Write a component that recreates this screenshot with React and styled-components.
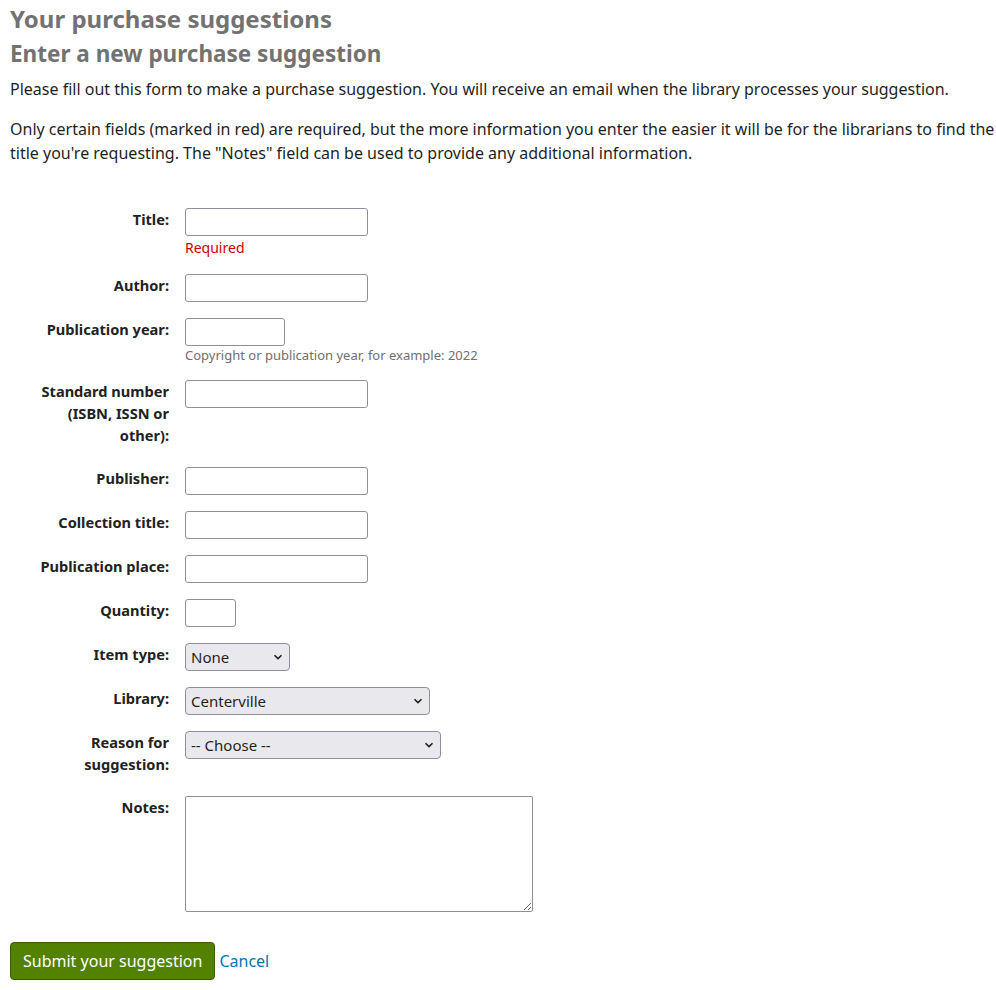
import React from "react";
import styled, { createGlobalStyle } from "styled-components";

const GlobalStyle = createGlobalStyle`
  body {
    margin: 0;
    background: #ffffff;
    font-family: "Noto Sans", "Open Sans", sans-serif;
    color: #1f1f1f;
  }
`;

function Chevron() {
  return (
    <svg width="10" height="6" viewBox="0 0 10 6">
      <path d="M1.5 1.2 L5 4.6 L8.5 1.2" fill="none" stroke="#1f1f1f" strokeWidth="1.6" />
    </svg>
  );
}

function SelectBox({ width, value }) {
  return (
    <StSelectWrap>
      <StSelect width={width} defaultValue={value}>
        <option>{value}</option>
      </StSelect>
      <StChevron>
        <Chevron />
      </StChevron>
    </StSelectWrap>
  );
}

function Row({ label, children }) {
  return (
    <StRow>
      <StLabel>{label}</StLabel>
      <StField>{children}</StField>
    </StRow>
  );
}

export default function App() {
  return (
    <StPage>
      <GlobalStyle />
      <StTitle>Your purchase suggestions</StTitle>
      <StSubTitle>Enter a new purchase suggestion</StSubTitle>
      <StText>
        Please fill out this form to make a purchase suggestion. You will receive an email when the
        library processes your suggestion.
      </StText>
      <StText>
        Only certain fields (marked in red) are required, but the more information you enter the
        easier it will be for the librarians to find the title you're requesting. The "Notes" field
        can be used to provide any additional information.
      </StText>

      <StForm>
        <Row label="Title:">
          <StInput width={183} />
          <StRequired>Required</StRequired>
        </Row>
        <Row label="Author:">
          <StInput width={183} />
        </Row>
        <Row label="Publication year:">
          <StInput width={100} />
          <StHint>Copyright or publication year, for example: 2022</StHint>
        </Row>
        <Row label="Standard number (ISBN, ISSN or other):">
          <StInput width={183} />
        </Row>
        <Row label="Publisher:">
          <StInput width={183} />
        </Row>
        <Row label="Collection title:">
          <StInput width={183} />
        </Row>
        <Row label="Publication place:">
          <StInput width={183} />
        </Row>
        <Row label="Quantity:">
          <StInput width={51} />
        </Row>
        <Row label="Item type:">
          <SelectBox width={105} value="None" />
        </Row>
        <Row label="Library:">
          <SelectBox width={245} value="Centerville" />
        </Row>
        <Row label="Reason for suggestion:">
          <SelectBox width={256} value="-- Choose --" />
        </Row>
        <Row label="Notes:">
          <StTextArea />
        </Row>
      </StForm>

      <StActions>
        <StSubmit type="button">Submit your suggestion</StSubmit>
        <StLink href="#">Cancel</StLink>
      </StActions>
    </StPage>
  );
}

const StPage = styled.div`
  padding: 2px 0 0 10px;
`;

const StTitle = styled.h1`
  margin: 0;
  font-size: 24px;
  line-height: 34px;
  font-weight: 700;
  color: #727272;
`;

const StSubTitle = styled.h2`
  margin: 1px 0 6px;
  font-size: 22.5px;
  line-height: 34px;
  font-weight: 700;
  color: #727272;
`;

const StText = styled.p`
  margin: 0 0 16px;
  font-size: 16px;
  line-height: 24px;
`;

const StForm = styled.div`
  display: flex;
  flex-direction: column;
  gap: 16px;
  margin-top: 43px;
`;

const StRow = styled.div`
  display: flex;
  align-items: flex-start;
`;

const StLabel = styled.label`
  flex: 0 0 140px;
  margin: 0 16px 0 19px;
  padding-bottom: 5px;
  text-align: right;
  font-size: 14.6px;
  line-height: 22px;
  font-weight: 700;
  color: #222222;
`;

const StField = styled.div`
  display: flex;
  flex-direction: column;
  align-items: flex-start;
`;

const StInput = styled.input`
  box-sizing: border-box;
  width: ${(p) => p.width}px;
  height: 28px;
  margin: 0;
  padding: 2px 6px;
  border: 1px solid #8f8f9d;
  border-radius: 3px;
  background: #ffffff;
  font-family: inherit;
  font-size: 15px;
`;

const StRequired = styled.span`
  margin-top: 1px;
  font-size: 14px;
  line-height: 21px;
  color: #cc0000;
`;

const StHint = styled.span`
  font-size: 13px;
  line-height: 18px;
  color: #6f6f6f;
`;

const StSelectWrap = styled.div`
  position: relative;
  display: inline-block;
`;

const StSelect = styled.select`
  box-sizing: border-box;
  appearance: none;
  width: ${(p) => p.width}px;
  height: 28px;
  margin: 0;
  padding: 0 24px 0 5px;
  border: 1px solid #8f8f9d;
  border-radius: 4px;
  background: #e9e9ed;
  font-family: inherit;
  font-size: 15px;
  color: #1f1f1f;
`;

const StChevron = styled.span`
  position: absolute;
  right: 7px;
  top: 11px;
  display: flex;
  pointer-events: none;
`;

const StTextArea = styled.textarea`
  box-sizing: border-box;
  width: 348px;
  height: 116px;
  margin: 0;
  border: 1px solid #8f8f9d;
  border-radius: 2px;
  font-family: inherit;
  font-size: 15px;
`;

const StActions = styled.div`
  display: flex;
  align-items: center;
  gap: 4px;
  margin-top: 30px;
  padding-bottom: 9px;
`;

const StSubmit = styled.button`
  box-sizing: border-box;
  height: 38px;
  padding: 0 12px;
  border: 1px solid #3d5c00;
  border-radius: 4px;
  background: #538200;
  color: #ffffff;
  font-family: inherit;
  font-size: 16px;
`;

const StLink = styled.a`
  font-size: 16px;
  color: #0076b2;
  text-decoration: none;
`;
